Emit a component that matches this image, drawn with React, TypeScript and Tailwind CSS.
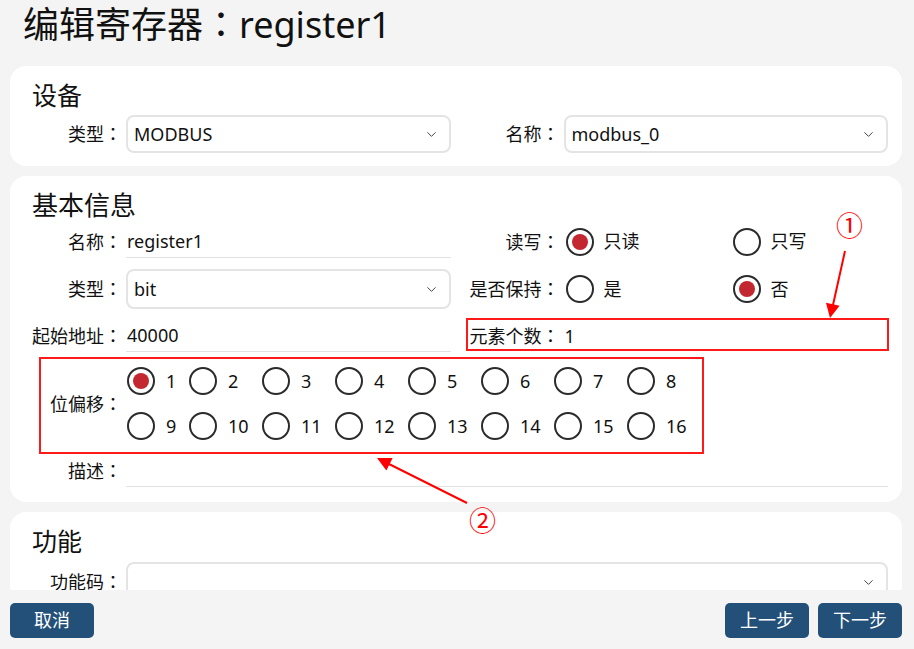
import React from "react";
import { ChevronDown } from "lucide-react";

const bits = Array.from({ length: 16 }, (_, i) => i + 1);

function Colon() {
  return <span className="font-['Noto_Sans_CJK_TC',sans-serif]">：</span>;
}

function Radio({ checked }: { checked?: boolean }) {
  return (
    <span className="flex h-[28px] w-[28px] shrink-0 items-center justify-center rounded-full border-2 border-[#2b2b2b] bg-white">
      {checked && <span className="h-[16px] w-[16px] rounded-full bg-[#c3272f]" />}
    </span>
  );
}

function Label({ text }: { text: string }) {
  return (
    <div className="w-[96px] shrink-0 pr-[4px] text-right whitespace-nowrap">
      {text}
      <Colon />
    </div>
  );
}

function Select({ value, h = "h-[38px]" }: { value?: string; h?: string }) {
  return (
    <div className={`flex flex-1 items-center justify-between rounded-lg border-2 border-[#e4e4e4] pl-[6px] pr-[10px] ${h}`}>
      <span>{value}</span>
      <ChevronDown size={15} strokeWidth={1.6} className="text-[#444]" />
    </div>
  );
}

function Line({ value }: { value?: string }) {
  return (
    <div className="flex h-full flex-1 items-center border-b border-[#e2e2e2] pl-[1px]">{value}</div>
  );
}

function RadioGroup({ options, selected }: { options: string[]; selected: number }) {
  return (
    <div className="flex flex-1 items-center pl-[2px]">
      {options.map((o, i) => (
        <div key={o} className="flex w-[167px] items-center gap-[10px]">
          <Radio checked={i === selected} />
          <span>{o}</span>
        </div>
      ))}
    </div>
  );
}

export default function App() {
  return (
    <div className="relative flex h-[649px] flex-col overflow-hidden bg-[#f4f4f4] font-['Noto_Sans','Noto_Sans_CJK_SC',sans-serif] text-[18px] text-[#111]">
      <header className="h-[56px] shrink-0 pl-[23px] text-[36px] leading-[44px] whitespace-nowrap">
        编辑寄存器
        <Colon />
        register1
      </header>

      <main className="flex flex-1 flex-col gap-[10px] overflow-hidden pl-[10px] pr-[12px] pt-[10px]">
        {/* 设备 */}
        <section className="shrink-0 rounded-2xl bg-white pb-[13px] pl-[20px] pr-[14px] pt-[11px]">
          <h2 className="h-[36px] pl-[2px] text-[25px] leading-[36px]">设备</h2>
          <div className="mt-[2px] grid grid-cols-2 gap-x-[17px]">
            <div className="flex items-center">
              <Label text="类型" />
              <Select value="MODBUS" />
            </div>
            <div className="flex items-center">
              <Label text="名称" />
              <Select value="modbus_0" />
            </div>
          </div>
        </section>

        {/* 基本信息 */}
        <section className="shrink-0 rounded-2xl bg-white pb-[15px] pl-[20px] pr-[14px] pt-[11px]">
          <h2 className="h-[36px] pl-[2px] text-[26px] leading-[36px]">基本信息</h2>
          <div className="mt-[2px] grid grid-cols-2 gap-x-[17px] gap-y-[11px]">
            <div className="flex h-[33px] items-center">
              <Label text="名称" />
              <Line value="register1" />
            </div>
            <div className="flex h-[33px] items-center">
              <Label text="读写" />
              <RadioGroup options={["只读", "只写"]} selected={0} />
            </div>
            <div className="flex h-[40px] items-center">
              <Label text="类型" />
              <Select value="bit" h="h-[40px]" />
            </div>
            <div className="flex h-[40px] items-center">
              <Label text="是否保持" />
              <RadioGroup options={["是", "否"]} selected={1} />
            </div>
            <div className="flex h-[32px] items-center">
              <Label text="起始地址" />
              <Line value="40000" />
            </div>
            <div className="flex h-[32px] items-center">
              <Label text="元素个数" />
              <div className="flex-1 pl-[1px]">1</div>
            </div>
          </div>

          <div className="flex items-center pt-[15px]">
            <Label text="位偏移" />
            <div className="grid grid-cols-[62px_repeat(7,73px)] gap-y-[17px] pl-[1px]">
              {bits.map((b) => (
                <div key={b} className="flex h-[28px] items-center gap-[11px]">
                  <Radio checked={b === 1} />
                  <span>{b}</span>
                </div>
              ))}
            </div>
          </div>

          <div className="mt-[15px] flex h-[32px] items-center">
            <Label text="描述" />
            <Line />
          </div>
        </section>

        {/* 功能 */}
        <section className="shrink-0 rounded-2xl bg-white pb-[13px] pl-[20px] pr-[14px] pt-[11px]">
          <h2 className="h-[36px] pl-[2px] text-[25px] leading-[36px]">功能</h2>
          <div className="mt-[3px] flex items-center">
            <Label text="功能码" />
            <Select h="h-[40px]" />
          </div>
        </section>
      </main>

      <footer className="flex h-[59px] shrink-0 items-start justify-between pl-[10px] pr-[12px] pt-[13px]">
        <button className="h-[35px] w-[84px] rounded-[5px] bg-[#235079] text-white">取消</button>
        <div className="flex gap-[9px]">
          <button className="h-[35px] w-[84px] rounded-[5px] bg-[#235079] text-white">上一步</button>
          <button className="h-[35px] w-[84px] rounded-[5px] bg-[#235079] text-white">下一步</button>
        </div>
      </footer>

      {/* annotations */}
      <div className="pointer-events-none absolute left-[466px] top-[318px] h-[33px] w-[423px] border-2 border-[#ff1a1a]" />
      <div className="pointer-events-none absolute left-[39px] top-[357px] h-[97px] w-[665px] border-2 border-[#ff1a1a]" />
      <svg className="pointer-events-none absolute left-0 top-0" width="914" height="649">
        <line x1="845" y1="251" x2="833" y2="305" stroke="#ff0000" strokeWidth="2" />
        <polygon points="830,318 839.6,305.8 826,302.8" fill="#ff0000" />
        <line x1="467" y1="503" x2="389" y2="464" stroke="#ff0000" strokeWidth="2" />
        <polygon points="377,458 392.6,458 386.4,470.6" fill="#ff0000" />
      </svg>
      <span className="pointer-events-none absolute left-[836px] top-[208px] font-['Noto_Sans_CJK_SC',sans-serif] text-[27px] leading-[34px] text-[#ff0000]">①</span>
      <span className="pointer-events-none absolute left-[469px] top-[503px] font-['Noto_Sans_CJK_SC',sans-serif] text-[27px] leading-[34px] text-[#ff0000]">②</span>
    </div>
  );
}
